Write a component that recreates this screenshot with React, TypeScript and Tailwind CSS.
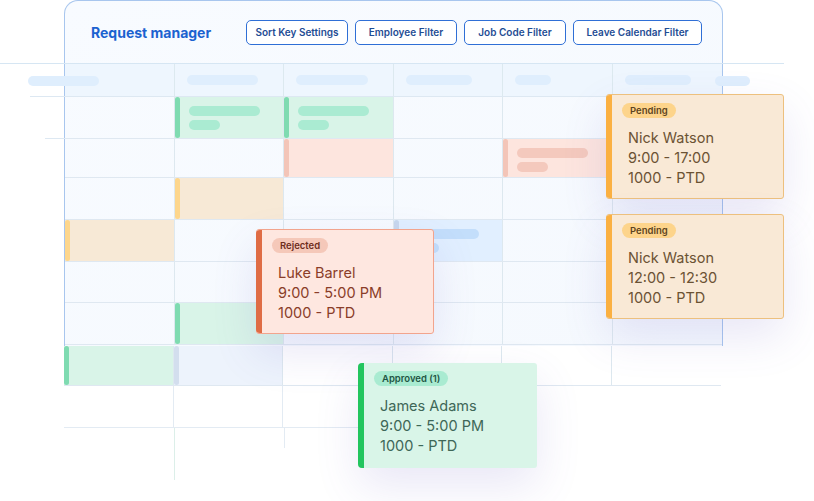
import React from 'react';

type Tone = 'green' | 'salmon' | 'orange' | 'blue' | 'slate';

interface Block {
  tone: Tone;
  pills?: boolean;
}

// per-row, per-column blocks; undefined = empty cell
const rows: { h: string; cells: (Block | undefined)[] }[] = [
  { h: 'h-[42px]', cells: [undefined, { tone: 'green', pills: true }, { tone: 'green', pills: true }, undefined, undefined, undefined] },
  { h: 'h-[39px]', cells: [undefined, undefined, { tone: 'salmon' }, undefined, { tone: 'salmon', pills: true }, undefined] },
  { h: 'h-[42px]', cells: [undefined, { tone: 'orange' }, undefined, undefined, undefined, undefined] },
  { h: 'h-[42px]', cells: [{ tone: 'orange' }, undefined, undefined, { tone: 'blue', pills: true }, undefined, undefined] },
  { h: 'h-[41px]', cells: [undefined, undefined, undefined, undefined, undefined, undefined] },
  { h: 'h-[42px]', cells: [undefined, { tone: 'green' }, undefined, undefined, undefined, undefined] },
];

const toneStyles: Record<Tone, { bg: string; bar: string; pill: string }> = {
  green: { bg: 'bg-[#d9f4e8]', bar: 'bg-[#7fdbb1]', pill: 'bg-[#aaebd2]' },
  salmon: { bg: 'bg-[#fde5de]', bar: 'bg-[#f3c5b8]', pill: 'bg-[#f4c9bd]' },
  orange: { bg: 'bg-[#f7e9d6]', bar: 'bg-[#fdd68c]', pill: 'bg-[#f8d9a8]' },
  blue: { bg: 'bg-[#e1efff]', bar: 'bg-[#c8d8ee]', pill: 'bg-[#c3defb]' },
  slate: { bg: 'bg-[#edf3fc]', bar: 'bg-[#d3deee]', pill: 'bg-[#dbe6f4]' },
};

const EventBlock: React.FC<{ block: Block }> = ({ block }) => {
  const s = toneStyles[block.tone];
  return (
    <div className={`flex h-full w-full ${s.bg}`}>
      <div className={`w-[5px] h-full rounded-[3px] ${s.bar}`} />
      {block.pills && (
        <div className="flex flex-col gap-[4px] pl-[9px] pt-[9px]">
          <div className={`h-[10px] w-[71px] rounded-full ${s.pill}`} />
          <div className={`h-[10px] w-[31px] rounded-full ${s.pill}`} />
        </div>
      )}
    </div>
  );
};

const buttons = [
  { label: 'Sort Key Settings', w: 'w-[102px]' },
  { label: 'Employee Filter', w: 'w-[102px]' },
  { label: 'Job Code Filter', w: 'w-[102px]' },
  { label: 'Leave Calendar Filter', w: 'w-[129px]' },
];

const headerPills = ['w-0', 'w-[71px]', 'w-[72px]', 'w-[66px]', 'w-[36px]', 'w-[66px]'];

type CardTone = 'rejected' | 'pending' | 'approved';

const cardStyles: Record<CardTone, { box: string; bar: string; badge: string; text: string }> = {
  rejected: {
    box: 'bg-[#fee7e0] border border-[#f2a48d]',
    bar: 'bg-[#df6c45]',
    badge: 'bg-[#f5c8b9] text-[#6e2d1d]',
    text: 'text-[#8a3d29]',
  },
  pending: {
    box: 'bg-[#f9e9d6] border border-[#edc07e]',
    bar: 'bg-[#fbb041]',
    badge: 'bg-[#fdd48b] text-[#5d4421]',
    text: 'text-[#6b5233]',
  },
  approved: {
    box: 'bg-[#d9f5e8]',
    bar: 'bg-[#22c55e]',
    badge: 'bg-[#a9ebd1] text-[#1e5543]',
    text: 'text-[#3e6757]',
  },
};

const RequestCard: React.FC<{
  tone: CardTone;
  status: string;
  name: string;
  time: string;
  code: string;
  pos: string;
}> = ({ tone, status, name, time, code, pos }) => {
  const s = cardStyles[tone];
  return (
    <div
      className={`absolute ${pos} w-[178px] h-[105px] flex rounded-[3px] shadow-[0_18px_45px_rgba(96,86,190,0.14)] ${s.box}`}
    >
      <div className={`w-[6px] h-full rounded-l-[4px] ${s.bar} -ml-px`} />
      <div className="flex flex-col items-start pl-[10px] pt-[8px]">
        <span className={`h-[15px] px-[8px] rounded-full text-[9.5px] font-semibold leading-[15px] ${s.badge}`}>
          {status}
        </span>
        <div className={`mt-[10px] pl-[6px] text-[14.5px] leading-[20px] ${s.text}`}>
          <div>{name}</div>
          <div>{time}</div>
          <div>{code}</div>
        </div>
      </div>
    </div>
  );
};

export default function App() {
  return (
    <div className="relative w-[814px] h-[501px] overflow-hidden bg-white font-['Inter',sans-serif]">
      <div className="ml-[64px] w-[659px]">
        {/* main card */}
        <div className="h-[346px] border border-b-0 border-[#a8c6ee] rounded-t-[14px] bg-gradient-to-br from-[#f8fbff] to-[#f5f9fe] overflow-hidden">
          <div className="h-[63px] flex items-center pl-[26px] border-b border-[#d6e6f3]">
            <h1 className="w-[155px] text-[14px] font-bold text-[#1b62d0]">Request manager</h1>
            <div className="flex gap-[7px]">
              {buttons.map((b) => (
                <button
                  key={b.label}
                  className={`${b.w} h-[25px] rounded-[5px] border-[1.5px] border-[#2f6fd6] bg-white text-[10px] font-semibold text-[#1f4d94]`}
                >
                  {b.label}
                </button>
              ))}
            </div>
          </div>

          {/* header row */}
          <div className="grid grid-cols-6 h-[33px] bg-[#eef6fe] border-b border-[#dde8f2]">
            {headerPills.map((w, i) => (
              <div key={i} className={`flex items-center pl-[12px] ${i < 5 ? 'border-r border-[#dce9ef]' : ''}`}>
                <div className={`h-[10px] ${w} rounded-full bg-[#dfeefd]`} />
              </div>
            ))}
          </div>

          {rows.map((row, r) => (
            <div key={r} className={`grid grid-cols-6 ${row.h} border-b border-[#dfe8f1]`}>
              {row.cells.map((cell, c) => (
                <div key={c} className={`${c < 5 ? 'border-r border-[#dde8ef]' : ''}`}>
                  {cell && <EventBlock block={cell} />}
                </div>
              ))}
            </div>
          ))}
        </div>

        {/* lower, open rows */}
        <div className="grid grid-cols-6 h-[40px] border-b border-[#dfe8f1] w-[657px]">
          <div className="border-r border-[#dde8ef]"><EventBlock block={{ tone: 'green' }} /></div>
          <div className="border-r border-[#dde8ef]"><EventBlock block={{ tone: 'slate' }} /></div>
          <div className="border-r border-[#dde8ef]" />
          <div className="border-r border-[#dde8ef]" />
          <div className="border-r border-[#dde8ef]" />
          <div />
        </div>
        <div className="grid grid-cols-6 h-[42px] w-[657px]">
          <div className="border-r border-b border-[#e3ebf3]" />
          <div className="border-r border-b border-[#e3ebf3]" />
          <div className="border-b border-[#e3ebf3] w-[76px]" />
        </div>
      </div>

      {/* grid lines running past the card */}
      <div className="absolute left-0 top-[63px] w-[784px] h-px bg-[#d6e6f3]" />
      <div className="absolute left-[30px] top-[96px] w-[35px] h-px bg-[#dde8f2]" />
      <div className="absolute left-[45px] top-[138px] w-[20px] h-px bg-[#dde8f2]" />
      <div className="absolute left-[174px] top-[428px] w-px h-[52px] bg-[#dcefe9]" />
      <div className="absolute left-[284px] top-[428px] w-px h-[20px] bg-[#e3ebf3]" />

      {/* header placeholders crossing the card edge */}
      <div className="absolute left-[28px] top-[76px] w-[71px] h-[10px] rounded-full bg-[#dfeefd]" />
      <div className="absolute left-[715px] top-[76px] w-[35px] h-[10px] rounded-full bg-[#dfeefd]" />

      {/* request cards */}
      <RequestCard
        tone="pending"
        status="Pending"
        name="Nick Watson"
        time="9:00 - 17:00"
        code="1000 - PTD"
        pos="left-[606px] top-[94px]"
      />
      <RequestCard
        tone="pending"
        status="Pending"
        name="Nick Watson"
        time="12:00 - 12:30"
        code="1000 - PTD"
        pos="left-[606px] top-[214px]"
      />
      <RequestCard
        tone="rejected"
        status="Rejected"
        name="Luke Barrel"
        time="9:00 - 5:00 PM"
        code="1000 - PTD"
        pos="left-[256px] top-[229px]"
      />
      <RequestCard
        tone="approved"
        status="Approved (1)"
        name="James Adams"
        time="9:00 - 5:00 PM"
        code="1000 - PTD"
        pos="left-[359px] top-[363px]"
      />
    </div>
  );
}
